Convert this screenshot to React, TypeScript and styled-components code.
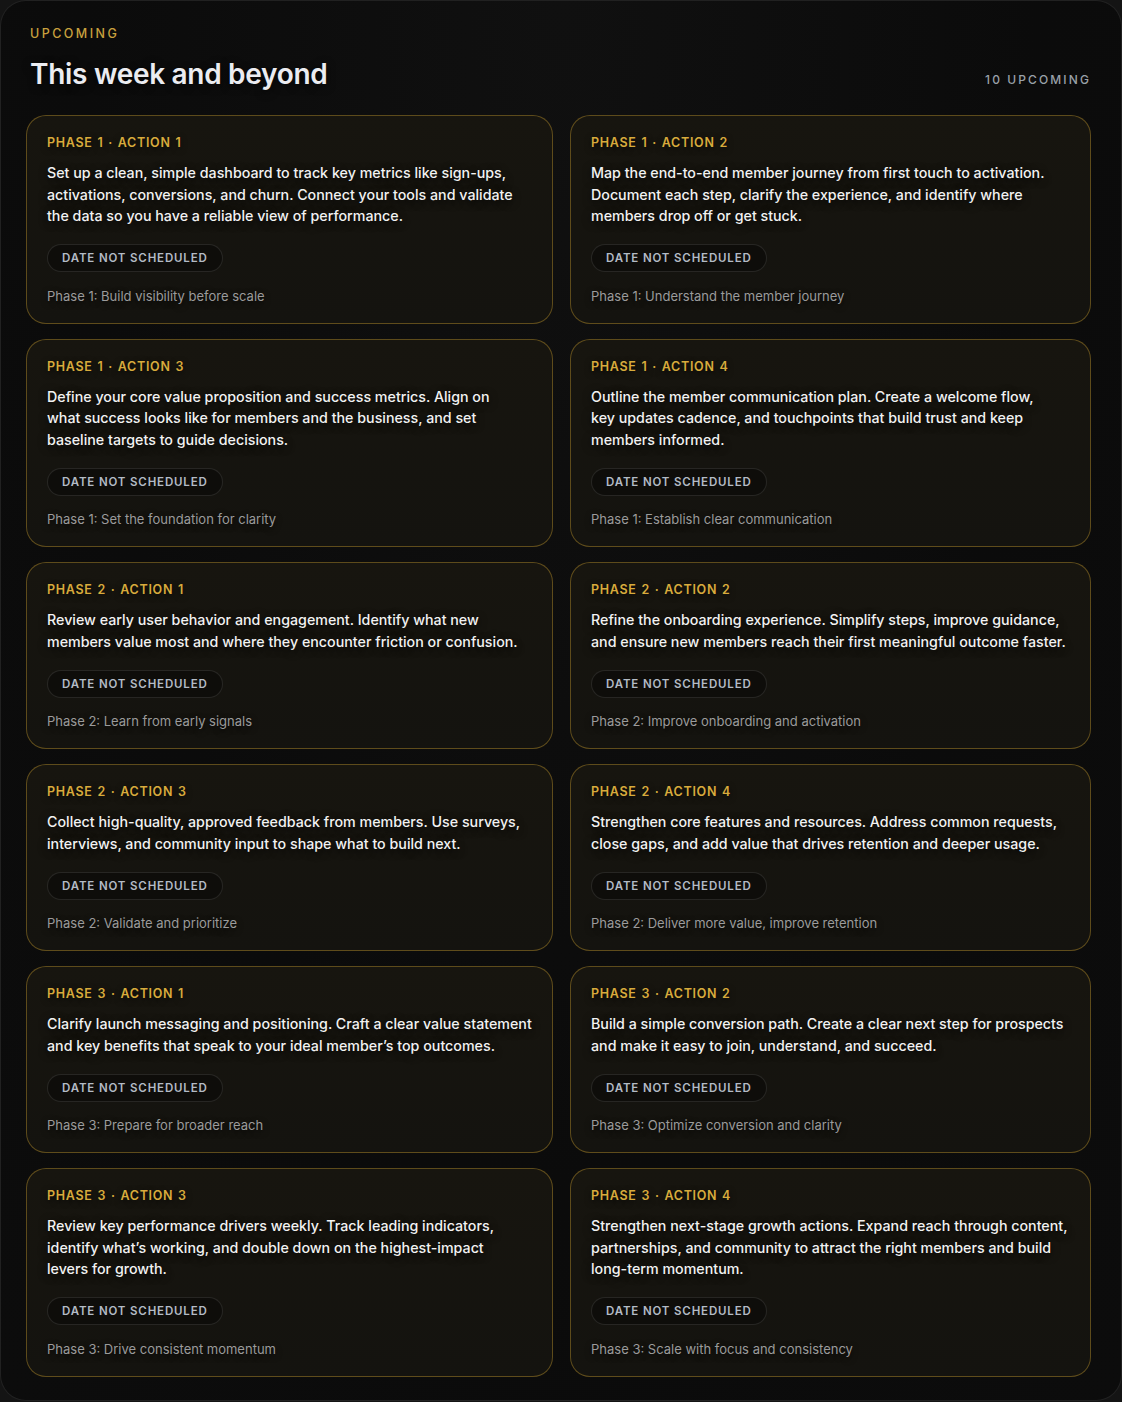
import React from "react";
import styled, { createGlobalStyle } from "styled-components";

const Global = createGlobalStyle`
  html, body { margin: 0; padding: 0; background: #141414; }
  body { font-family: Inter, "Noto Sans", sans-serif; -webkit-font-smoothing: antialiased; }
  * { box-sizing: border-box; }
`;

const Panel = styled.div`
  width: 1122px;
  min-height: 1401px;
  background: radial-gradient(ellipse at 50% 0%, #101010 0%, #0b0b0b 60%, #0c0c0c 100%);
  border: 1px solid rgba(255, 255, 255, 0.09);
  border-radius: 26px;
  padding: 24px 30px 22px 25px;
`;

const Header = styled.header`
  display: flex;
  align-items: flex-end;
  justify-content: space-between;
  padding: 0 0 0 4px;
  margin-bottom: 23px;
`;

const HeadLeft = styled.div`
  display: flex;
  flex-direction: column;
  gap: 13px;
`;

const Eyebrow = styled.div`
  color: #c9a13e;
  font-size: 12.5px;
  font-weight: 500;
  letter-spacing: 2.45px;
  line-height: 18px;
`;

const Title = styled.h1`
  margin: 0;
  color: #ebecf1;
  font-size: 28px;
  font-weight: 600;
  letter-spacing: -0.3px;
  line-height: 36px;
  text-shadow: 0 2px 8px rgba(0, 0, 0, 0.8);
`;

const Count = styled.div`
  color: #9aa1a9;
  font-size: 12px;
  font-weight: 500;
  letter-spacing: 2.1px;
  line-height: 18px;
  margin-bottom: 3px;
`;

const Grid = styled.div`
  display: grid;
  grid-template-columns: 527px 521px;
  column-gap: 17px;
  row-gap: 15px;
`;

const Card = styled.article`
  background: linear-gradient(180deg, #17150f 0%, #14130f 100%);
  border: 1px solid rgba(196, 152, 46, 0.42);
  border-radius: 20px;
  padding: 19px 14px 18px 20px;
  display: flex;
  flex-direction: column;
`;

const Label = styled.div`
  color: #d8ab3c;
  font-size: 12.5px;
  font-weight: 600;
  letter-spacing: 0.7px;
  word-spacing: 1px;
  line-height: 16px;
  text-shadow: 0 2px 6px rgba(0, 0, 0, 0.7);
`;

const Body = styled.p`
  margin: 11px 0 0 0;
  color: #f2f2f2;
  font-size: 14.25px;
  font-weight: 500;
  line-height: 21.5px;
  white-space: pre-line;
  text-shadow: 0 2px 8px rgba(0, 0, 0, 0.85);
  flex: 1;
`;

const Pill = styled.span`
  align-self: flex-start;
  margin-top: 17.5px;
  height: 28px;
  padding: 0 14px;
  display: inline-flex;
  align-items: center;
  border-radius: 999px;
  border: 1px solid rgba(255, 255, 255, 0.1);
  background: rgba(0, 0, 0, 0.3);
  color: #b3bbc5;
  font-size: 11.5px;
  font-weight: 600;
  letter-spacing: 0.85px;
`;

const Footer = styled.div`
  margin-top: 14.5px;
  color: #9b9b9b;
  font-size: 13px;
  font-weight: 400;
  line-height: 18px;
  text-shadow: 0 2px 6px rgba(0, 0, 0, 0.7);
`;

type Item = { label: string; text: string; footer: string };

const items: Item[] = [
  {
    label: "PHASE 1 · ACTION 1",
    text: "Set up a clean, simple dashboard to track key metrics like sign-ups,\nactivations, conversions, and churn. Connect your tools and validate\nthe data so you have a reliable view of performance.",
    footer: "Phase 1: Build visibility before scale",
  },
  {
    label: "PHASE 1 · ACTION 2",
    text: "Map the end-to-end member journey from first touch to activation.\nDocument each step, clarify the experience, and identify where\nmembers drop off or get stuck.",
    footer: "Phase 1: Understand the member journey",
  },
  {
    label: "PHASE 1 · ACTION 3",
    text: "Define your core value proposition and success metrics. Align on\nwhat success looks like for members and the business, and set\nbaseline targets to guide decisions.",
    footer: "Phase 1: Set the foundation for clarity",
  },
  {
    label: "PHASE 1 · ACTION 4",
    text: "Outline the member communication plan. Create a welcome flow,\nkey updates cadence, and touchpoints that build trust and keep\nmembers informed.",
    footer: "Phase 1: Establish clear communication",
  },
  {
    label: "PHASE 2 · ACTION 1",
    text: "Review early user behavior and engagement. Identify what new\nmembers value most and where they encounter friction or confusion.",
    footer: "Phase 2: Learn from early signals",
  },
  {
    label: "PHASE 2 · ACTION 2",
    text: "Refine the onboarding experience. Simplify steps, improve guidance,\nand ensure new members reach their first meaningful outcome faster.",
    footer: "Phase 2: Improve onboarding and activation",
  },
  {
    label: "PHASE 2 · ACTION 3",
    text: "Collect high-quality, approved feedback from members. Use surveys,\ninterviews, and community input to shape what to build next.",
    footer: "Phase 2: Validate and prioritize",
  },
  {
    label: "PHASE 2 · ACTION 4",
    text: "Strengthen core features and resources. Address common requests,\nclose gaps, and add value that drives retention and deeper usage.",
    footer: "Phase 2: Deliver more value, improve retention",
  },
  {
    label: "PHASE 3 · ACTION 1",
    text: "Clarify launch messaging and positioning. Craft a clear value statement\nand key benefits that speak to your ideal member’s top outcomes.",
    footer: "Phase 3: Prepare for broader reach",
  },
  {
    label: "PHASE 3 · ACTION 2",
    text: "Build a simple conversion path. Create a clear next step for prospects\nand make it easy to join, understand, and succeed.",
    footer: "Phase 3: Optimize conversion and clarity",
  },
  {
    label: "PHASE 3 · ACTION 3",
    text: "Review key performance drivers weekly. Track leading indicators,\nidentify what’s working, and double down on the highest-impact\nlevers for growth.",
    footer: "Phase 3: Drive consistent momentum",
  },
  {
    label: "PHASE 3 · ACTION 4",
    text: "Strengthen next-stage growth actions. Expand reach through content,\npartnerships, and community to attract the right members and build\nlong-term momentum.",
    footer: "Phase 3: Scale with focus and consistency",
  },
];

export default function App() {
  return (
    <>
      <Global />
      <Panel>
        <Header>
          <HeadLeft>
            <Eyebrow>UPCOMING</Eyebrow>
            <Title>This week and beyond</Title>
          </HeadLeft>
          <Count>10 UPCOMING</Count>
        </Header>
        <Grid>
          {items.map((it) => (
            <Card key={it.label}>
              <Label>{it.label}</Label>
              <Body>{it.text}</Body>
              <Pill>DATE NOT SCHEDULED</Pill>
              <Footer>{it.footer}</Footer>
            </Card>
          ))}
        </Grid>
      </Panel>
    </>
  );
}
